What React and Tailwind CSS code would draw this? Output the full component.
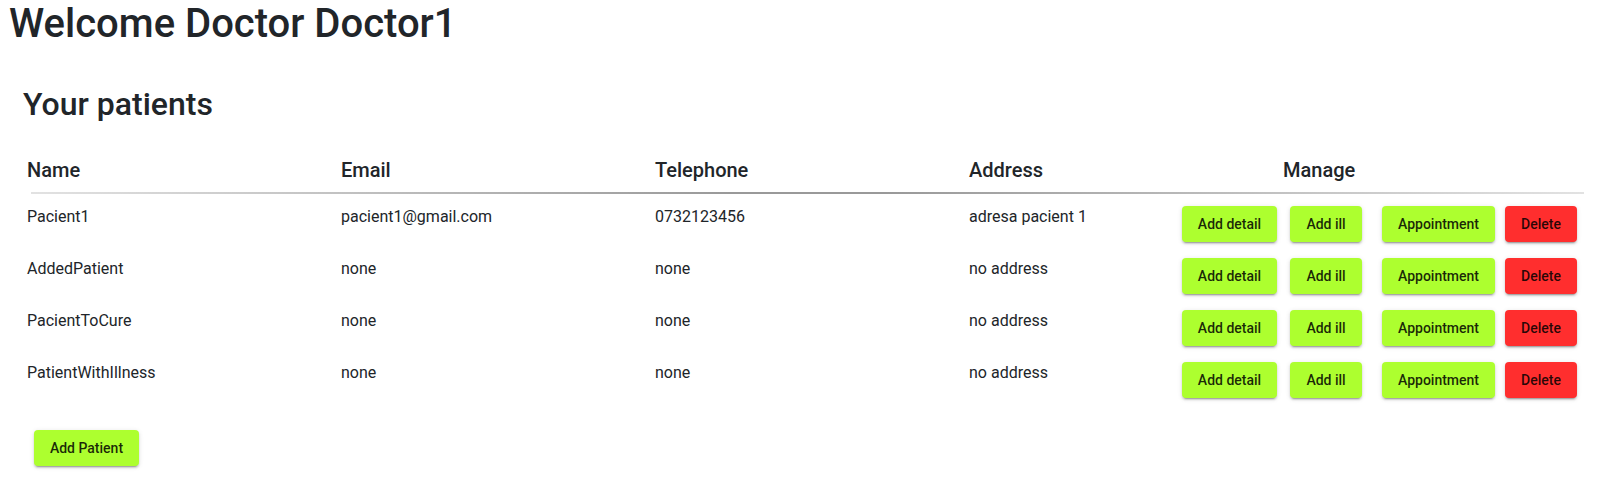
import React from 'react';

const patients = [
  { name: 'Pacient1', email: 'pacient1@gmail.com', phone: '0732123456', address: 'adresa pacient 1' },
  { name: 'AddedPatient', email: 'none', phone: 'none', address: 'no address' },
  { name: 'PacientToCure', email: 'none', phone: 'none', address: 'no address' },
  { name: 'PatientWithIllness', email: 'none', phone: 'none', address: 'no address' },
];

const btn =
  'h-9 rounded-[4px] text-[14px] font-medium leading-[1.75] text-black/85 flex items-center justify-center shadow-[0px_3px_1px_-2px_rgba(0,0,0,0.2),0px_2px_2px_0px_rgba(0,0,0,0.14),0px_1px_5px_0px_rgba(0,0,0,0.12)]';

const App = () => {
  return (
    <div className="min-h-screen bg-white text-[#212529] font-['Roboto',sans-serif]">
      <h1 className="pl-[9px] text-[40px] font-medium leading-[1.2]">Welcome Doctor Doctor1</h1>

      <div className="px-[15px]">
        <h2 className="mt-[37px] pl-[8px] text-[32px] font-medium leading-[1.2]">Your patients</h2>

        <div className="mt-[35px] flex pb-[10px] text-[20px] font-medium leading-[24px]">
          <div className="w-[314px] pl-[12px]">Name</div>
          <div className="w-[314px] pl-[12px]">Email</div>
          <div className="w-[314px] pl-[12px]">Telephone</div>
          <div className="w-[314px] pl-[12px]">Address</div>
          <div className="w-[314px] pl-[12px]">Manage</div>
        </div>
        <div className="ml-[16px] h-[2px] w-[1553px] bg-[linear-gradient(to_right,#e2e2e2,#999999_45%,#999999_55%,#e2e2e2)]" />

        {patients.map((p) => (
          <div key={p.name} className="flex h-[52px] items-start text-[16px] leading-[24px]">
            <div className="w-[314px] pl-[12px] pt-[11px]">{p.name}</div>
            <div className="w-[314px] pl-[12px] pt-[11px]">{p.email}</div>
            <div className="w-[314px] pl-[12px] pt-[11px]">{p.phone}</div>
            <div className="w-[225px] pl-[12px] pt-[11px]">{p.address}</div>
            <div className="flex pt-[12px]">
              <button className={`${btn} w-[95px] bg-[#adff2f]`}>Add detail</button>
              <button className={`${btn} ml-[13px] w-[72px] bg-[#adff2f]`}>Add ill</button>
              <button className={`${btn} ml-[20px] w-[113px] bg-[#adff2f]`}>Appointment</button>
              <button className={`${btn} ml-[10px] w-[72px] bg-[#ff2e2e]`}>Delete</button>
            </div>
          </div>
        ))}

        <button className={`${btn} ml-[19px] mt-[28px] w-[105px] bg-[#adff2f]`}>Add Patient</button>
      </div>
    </div>
  );
};

export default App;
